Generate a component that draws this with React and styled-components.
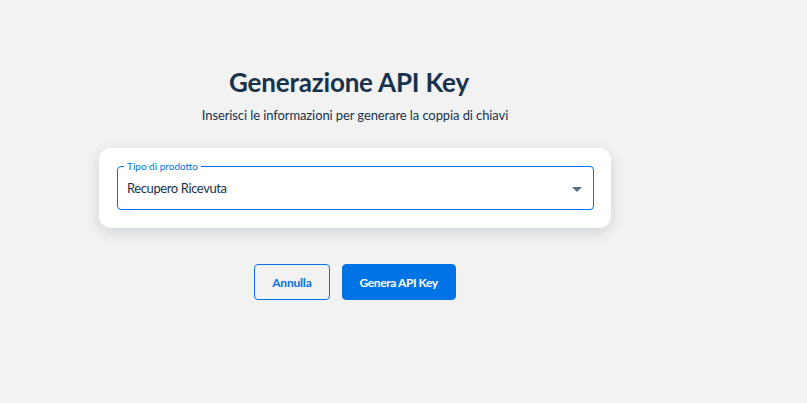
import React from "react";
import styled, { createGlobalStyle } from "styled-components";

const Global = createGlobalStyle`
  html, body { margin: 0; padding: 0; background: #F2F2F2; }
  body { font-family: "Lato", "Noto Sans", sans-serif; color: #17324D; }
  * { box-sizing: border-box; }
`;

const Page = styled.div`
  width: 807px;
  height: 403px;
  background: #F2F2F2;
  padding: 64px 0 0 99px;
`;

const Column = styled.div`
  width: 512px;
  display: flex;
  flex-direction: column;
  align-items: center;
`;

const Title = styled.h1`
  margin: 0;
  font-size: 26px;
  line-height: 36px;
  font-weight: 700;
  letter-spacing: -0.2px;
  color: #17324D;
  transform: translateX(-6px);
`;

const Subtitle = styled.p`
  margin: 5px 0 0;
  font-size: 13px;
  line-height: 20px;
  letter-spacing: -0.1px;
  color: #17324D;
`;

const Card = styled.div`
  margin-top: 23px;
  width: 512px;
  background: #fff;
  border-radius: 12px;
  box-shadow: 0 4px 14px rgba(23, 50, 77, 0.16);
  padding: 12px 17px 18px 18px;
`;

const Field = styled.fieldset`
  position: relative;
  margin: 0;
  height: 50px;
  padding: 0 0 0 9px;
  border: 1px solid #0073E6;
  border-radius: 4px;
  display: flex;
  align-items: center;
`;

const Legend = styled.legend`
  padding: 0 3px;
  margin-left: -3px;
  font-size: 10px;
  line-height: 12px;
  color: #0073E6;
`;

const Value = styled.span`
  font-size: 13px;
  letter-spacing: -0.4px;
  color: #17324D;
  margin-top: -5px;
`;

const Arrow = styled.span`
  position: absolute;
  right: 11px;
  top: 15px;
  width: 0;
  height: 0;
  border-left: 5px solid transparent;
  border-right: 5px solid transparent;
  border-top: 5px solid #5C6F82;
`;

const Actions = styled.div`
  margin-top: 36px;
  display: flex;
  gap: 12px;
`;

const Button = styled.button`
  height: 36px;
  padding: 0 17px;
  border-radius: 4px;
  border: 1px solid #0073E6;
  background: ${(p) => (p.$primary ? "#0073E6" : "transparent")};
  color: ${(p) => (p.$primary ? "#fff" : "#0073E6")};
  font-family: inherit;
  font-size: 12px;
  letter-spacing: ${(p) => (p.$primary ? "-0.4px" : "-0.2px")};
  font-weight: 700;
  cursor: pointer;
`;

export default function App() {
  return (
    <>
      <Global />
      <Page>
        <Column>
          <Title>Generazione API Key</Title>
          <Subtitle>Inserisci le informazioni per generare la coppia di chiavi</Subtitle>
          <Card>
            <Field>
              <Legend>Tipo di prodotto</Legend>
              <Value>Recupero Ricevuta</Value>
              <Arrow />
            </Field>
          </Card>
          <Actions>
            <Button>Annulla</Button>
            <Button $primary>Genera API Key</Button>
          </Actions>
        </Column>
      </Page>
    </>
  );
}
